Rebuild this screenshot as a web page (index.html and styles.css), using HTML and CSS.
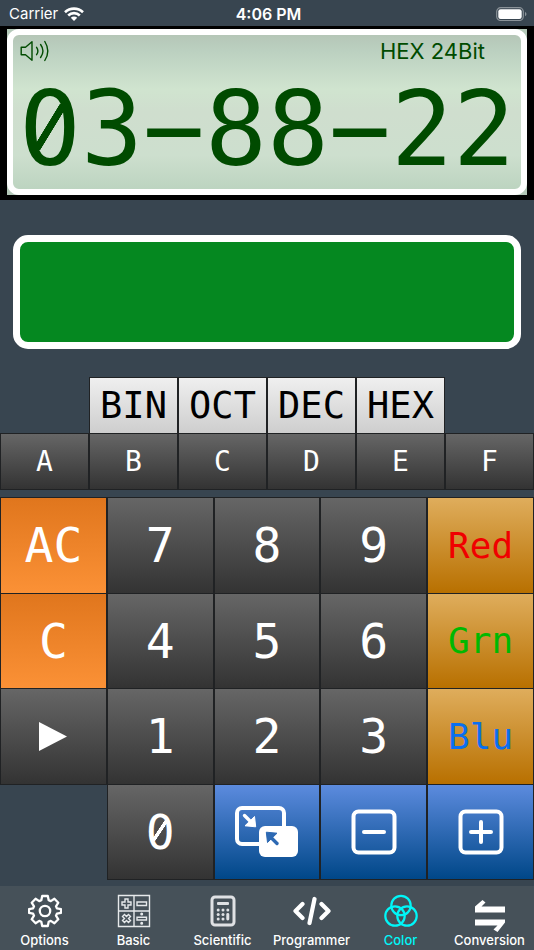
FILE: index.html
```html
<!DOCTYPE html>
<html lang="en">
<head>
<meta charset="utf-8">
<meta name="viewport" content="width=device-width, initial-scale=1">
<title>Color Calculator</title>
<link rel="stylesheet" href="styles.css">
</head>
<body>
<header class="status">
  <div class="carrier">Carrier
    <svg width="20" height="14" viewBox="0 0 20 14" fill="none" stroke="#fff" stroke-width="2.6"><path d="M1 5.2a13 13 0 0 1 18 0M4.2 8.5a8.3 8.3 0 0 1 11.6 0"/><path d="M10 14L6.8 10.8a4.6 4.6 0 0 1 6.4 0z" fill="#fff" stroke="none"/></svg>
  </div>
  <div class="time">4:06 PM</div>
  <div class="battery">
    <svg width="32" height="14" viewBox="0 0 32 14"><rect x=".7" y=".7" width="26.6" height="12.8" rx="4" fill="none" stroke="#8b9399" stroke-width="1.2"/><rect x="2.3" y="2.2" width="23.4" height="9.8" rx="2.3" fill="#fff"/><path d="M29 4.7q3 2.3 0 4.6z" fill="#8b9399"/></svg>
  </div>
</header>
<main class="calculator">
  <section class="display">
    <div class="lcd">
      <div class="glass">
        <div class="info">
          <svg width="30" height="22" viewBox="0 0 30 22" fill="none" stroke="#004b00" stroke-width="1.4" stroke-linejoin="round" stroke-linecap="round"><path d="M1.2 7.2h4.3L12 1.8v18.4l-6.5-5.4H1.2zM16.6 7.3q2.6 3.7 0 7.4M20.6 4.5q4.7 6.5 0 13M24.8 1.5q6 9.5 0 19"/></svg>
          <span class="mode">HEX 24Bit</span>
        </div>
        <output class="value"><span class="zero">0</span>3−88−22</output>
      </div>
    </div>
  </section>
  <div class="swatch"></div>
  <div class="bases">
    <button class="key base">BIN</button>
    <button class="key base">OCT</button>
    <button class="key base">DEC</button>
    <button class="key base">HEX</button>
  </div>
  <div class="letters">
    <button class="key">A</button>
    <button class="key">B</button>
    <button class="key">C</button>
    <button class="key">D</button>
    <button class="key">E</button>
    <button class="key">F</button>
  </div>
  <div class="keypad">
    <button class="key clear">AC</button>
    <button class="key">7</button>
    <button class="key">8</button>
    <button class="key">9</button>
    <button class="key channel red">Red</button>
    <button class="key clear">C</button>
    <button class="key">4</button>
    <button class="key">5</button>
    <button class="key">6</button>
    <button class="key channel green">Grn</button>
    <button class="key" aria-label="Next"><svg width="28" height="29" viewBox="0 0 28 29"><path d="M0 0l28 14.5L0 29z" fill="#fff"/></svg></button>
    <button class="key">1</button>
    <button class="key">2</button>
    <button class="key">3</button>
    <button class="key channel blue">Blu</button>
    <button class="key second"><span class="zero">0</span></button>
    <button class="key action" aria-label="Swap"><svg width="64" height="52" viewBox="0 0 64 52"><rect x="2" y="2" width="47" height="36" rx="5" fill="none" stroke="#fff" stroke-width="4"/><rect x="24" y="20" width="39" height="31" rx="6" fill="#fff"/><path d="M9.5 9.500l7 7" stroke="#fff" stroke-width="3.4" stroke-linecap="round"/><path d="M19.500 10.500l1.200 10.300-10.700-1z" fill="#fff" stroke="#fff" stroke-linejoin="round"/><path d="M42 37.500l-7-7" stroke="#2d69b3" stroke-width="3.400" stroke-linecap="round"/><path d="M32.500 36.500l-1.200-10.300 10.700 1z" fill="#2d69b3" stroke="#2d69b3" stroke-linejoin="round"/></svg></button>
    <button class="key action" aria-label="Decrease"><svg width="46" height="46" viewBox="0 0 46 46" fill="none" stroke="#fff" stroke-width="4" stroke-linecap="round"><rect x="2.500" y="2.500" width="41" height="41" rx="5"/><path d="M13 23h20"/></svg></button>
    <button class="key action" aria-label="Increase"><svg width="46" height="46" viewBox="0 0 46 46" fill="none" stroke="#fff" stroke-width="4" stroke-linecap="round"><rect x="2.500" y="2.500" width="41" height="41" rx="5"/><path d="M13 23h20M23 13v20"/></svg></button>
  </div>
</main>
<nav class="tabs">
  <a href="#options"><svg width="34" height="34" viewBox="0 0 34 34" fill="none" stroke="#fff" stroke-width="2.3" stroke-linejoin="round"><path d="M14.200 2h5.600l.9 4.200 2.100.9 3.600-2.300 3.900 3.900-2.300 3.600.9 2.100 4.100.8v3.600l-4.100.8-.9 2.100 2.300 3.600-3.900 3.900-3.600-2.300-2.100.9-.9 4.200h-5.600l-.9-4.200-2.100-.9-3.600 2.300-3.900-3.900L6 21.700l-.9-2.100-4.100-.8v-3.600l4.100-.8.900-2.100-2.300-3.600 3.900-3.900 3.600 2.300 2.100-.9z"/><circle cx="17" cy="17" r="5.200"/></svg>Options</a>
  <a href="#basic"><svg width="34" height="34" viewBox="0 0 34 34" fill="none" stroke="#e6e9eb" stroke-width="1.400"><path d="M1.500 1.500h31v31h-31zM17 1.500v31M1.500 17h31"/><path d="M8 5h3v3h3v3h-3v3H8v-3H5V8h3zM20 8h9.500v3.500H20zM20 23.200h9.500v2.800H20z"/><path d="M5.500 22.500l2-2 2 2 2-2 2 2-2 2 2 2-2 2-2-2-2 2-2-2 2-2z"/><circle cx="24.700" cy="20" r=".8" fill="#fff"/><circle cx="24.700" cy="29.200" r=".8" fill="#fff"/></svg>Basic</a>
  <a href="#scientific"><svg width="34" height="34" viewBox="0 0 34 34" fill="#dfe1e4"><rect x="6" y="3" width="22" height="28" rx="3" fill="none" stroke="#dfe1e4" stroke-width="3"/><rect x="11" y="8" width="12" height="3" rx="1"/><circle cx="12.200" cy="16" r="1.500"/><circle cx="17" cy="16" r="1.500"/><circle cx="21.800" cy="16" r="1.500"/><circle cx="12.200" cy="20.500" r="1.500"/><circle cx="17" cy="20.500" r="1.500"/><circle cx="12.200" cy="25" r="1.500"/><circle cx="17" cy="25" r="1.500"/><rect x="20.300" y="19" width="3" height="7.500" rx="1.400"/></svg>Scientific</a>
  <a href="#programmer"><svg width="38" height="34" viewBox="0 0 38 34" fill="none" stroke="#fff" stroke-width="4.200" stroke-linecap="round" stroke-linejoin="round"><path d="M9.500 10L2.500 17l7 7M28.500 10l7 7-7 7M21.500 5L16.500 29"/></svg>Programmer</a>
  <a href="#color" class="current" aria-current="page"><svg width="34" height="34" viewBox="0 0 34 34" fill="none" stroke="#00f6f8" stroke-width="2.200"><circle cx="17" cy="11.500" r="9.700"/><circle cx="11" cy="22" r="9.700"/><circle cx="23" cy="22" r="9.700"/></svg>Color</a>
  <a href="#conversion"><svg class="arrows" width="34" height="34" viewBox="0 0 34 34" fill="#fff"><path d="M2 12.500L9.500 6l3 2.500-4 4H32v6H2zM2 25.500h30v3L24.500 38l-4-2.500 4-4H2z"/></svg>Conversion</a>
</nav>
</body>
</html>
```
FILE: styles.css
```css
* {
  box-sizing: border-box;
}

body {
  margin: 0;
  min-height: 100vh;
  display: flex;
  flex-direction: column;
  background: #384550;
  color: #fff;
  font-family: Inter, "Liberation Sans", sans-serif;
}

svg {
  display: block;
  flex: none;
}

.status {
  display: grid;
  grid-template-columns: 1fr auto 1fr;
  align-items: center;
  height: 26px;
  padding: 1px 6px 0 9px;
  font-size: 15px;
}

.carrier {
  display: flex;
  align-items: center;
  gap: 6px;
}

.time {
  font-size: 16px;
  font-weight: 600;
}

.battery {
  justify-self: end;
}

.calculator {
  flex: 1;
  display: flex;
  flex-direction: column;
}

.display {
  background: #000;
  padding: 3px 7px 5px;
}

.lcd {
  background: #b4c9b9;
}

.glass {
  height: 166px;
  border: 6px solid #fff;
  border-radius: 12px;
  background: linear-gradient(#b5c6b7 0%, #bbd0c0 10%, #d0e4cf 35%, #cfdece 50%, #cddfce 78%, #bcd4c0 100%);
  color: #004b00;
}

.info {
  display: flex;
  justify-content: space-between;
  align-items: center;
  height: 32px;
  padding: 0 36px 0 7px;
}

.mode {
  font-size: 22px;
}

.value {
  --ground: #cfdfce;
  display: block;
  text-align: center;
  white-space: nowrap;
  font-family: "DejaVu Sans Mono", monospace;
  font-size: 103px;
  line-height: 124px;
}

/* Slashed zero: masks the centre dot and draws a diagonal bar */
.zero {
  --ground: #4c4c4c;
  position: relative;
}

.value .zero {
  --ground: #cfdfce;
}

.zero::after {
  content: "";
  position: absolute;
  left: 50%;
  top: 50%;
  width: 0.28em;
  height: 0.44em;
  margin: -0.24em 0 0 -0.14em;
  background:
    linear-gradient(to bottom right, transparent 42%, currentColor 43% 57%, transparent 58%),
    radial-gradient(0.1em 0.12em at center, var(--ground) 96%, transparent);
}

.swatch {
  height: 114px;
  margin: 35px 13px 28px;
  border: 7px solid #fff;
  border-radius: 15px;
  background: #058820;
}

.bases,
.letters {
  display: grid;
  grid-template-columns: repeat(6, 1fr);
  grid-auto-rows: 56px;
}

.base:first-child {
  grid-column-start: 2;
}

.letters {
  margin-bottom: 8px;
}

.keypad {
  flex: 1;
  display: grid;
  grid-template-columns: repeat(5, 1fr);
  grid-template-rows: repeat(4, minmax(80px, 1fr));
  margin-bottom: 7px;
}

.key {
  display: flex;
  align-items: center;
  justify-content: center;
  min-width: 0;
  margin: 0;
  padding: 0;
  border: 1px solid #202224;
  border-bottom-width: 0;
  box-shadow: 0 1px #202224;
  background: linear-gradient(#666, #333);
  color: #fff;
  font-family: "DejaVu Sans Mono", monospace;
  font-size: 48px;
}

.letters .key {
  font-size: 28px;
}

.base {
  background: linear-gradient(#efefef, #cecece);
  color: #000;
  font-size: 37px;
}

.clear {
  background: linear-gradient(#e0761d, #fb9136);
}

.channel {
  background: linear-gradient(#dfad5c, #b87000);
  font-size: 36px;
}

.red {
  color: #f00000;
}

.green {
  color: #00b800;
}

.blue {
  color: #0a6ff0;
}

.second {
  grid-column-start: 2;
}

.action {
  background: linear-gradient(#5c8bde, #004788);
}

.tabs {
  display: grid;
  grid-template-columns: repeat(6, 1fr);
  height: 64px;
  background: #465159;
}

.tabs a {
  display: flex;
  flex-direction: column;
  align-items: center;
  gap: 4px;
  padding-top: 8px;
  color: #fff;
  font-size: 13px;
  font-weight: 500;
  line-height: 16px;
  text-decoration: none;
}

.tabs .current {
  color: #00f6f8;
}

.arrows {
  overflow: visible;
}
```
